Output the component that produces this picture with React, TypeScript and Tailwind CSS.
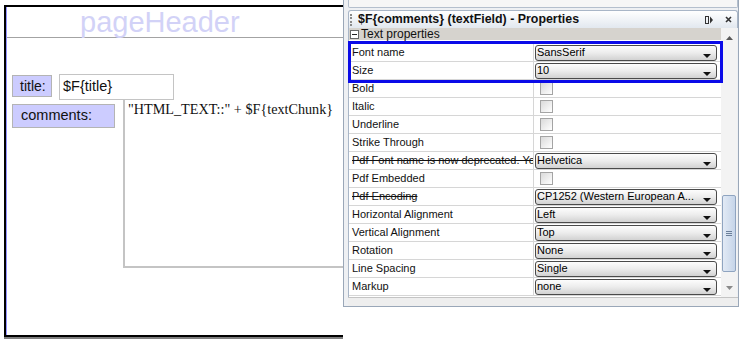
import React from "react"

type Row = {
	name: string
	kind: "select" | "check"
	value?: string
	strike?: boolean
	tall?: boolean
}

const rows: Row[] = [
	{ name: "Font name", kind: "select", value: "SansSerif", tall: true },
	{ name: "Size", kind: "select", value: "10" },
	{ name: "Bold", kind: "check" },
	{ name: "Italic", kind: "check" },
	{ name: "Underline", kind: "check" },
	{ name: "Strike Through", kind: "check" },
	{
		name: "Pdf Font name is now deprecated. You should use font extensions",
		kind: "select",
		value: "Helvetica",
		strike: true,
	},
	{ name: "Pdf Embedded", kind: "check" },
	{
		name: "Pdf Encoding",
		kind: "select",
		value: "CP1252 (Western European A...",
		strike: true,
	},
	{ name: "Horizontal Alignment", kind: "select", value: "Left" },
	{ name: "Vertical Alignment", kind: "select", value: "Top" },
	{ name: "Rotation", kind: "select", value: "None" },
	{ name: "Line Spacing", kind: "select", value: "Single" },
	{ name: "Markup", kind: "select", value: "none" },
]

function Select({ value }: { value: string }) {
	return (
		<div className="relative flex h-[16px] w-[182px] items-center rounded-[3px] border border-[#4a4a4a] bg-linear-to-b from-[#fdfdfd] via-[#ececec] to-[#d2d2d2] pl-[1px] text-[11px] leading-none text-black">
			<span className="whitespace-nowrap">{value}</span>
			<svg
				className="absolute right-[5px] top-[8px]"
				width="8"
				height="4"
				viewBox="0 0 8 4"
			>
				<path d="M0 0h8L4 4z" fill="#111" />
			</svg>
		</div>
	)
}

function Check() {
	return (
		<div className="ml-[5px] h-[13px] w-[13px] border border-[#a4a4a4] bg-linear-to-br from-[#dadada] to-white" />
	)
}

function Canvas() {
	return (
		<div className="h-full w-[343px] shrink-0 overflow-hidden">
			<div className="ml-[4px] mt-[5px] h-[332px] w-[420px] border-y-2 border-l-2 border-black shadow-[0_2px_0_#7f7f7f]">
				<div className="relative h-full border-l border-[#9494ff] font-['Liberation_Sans',Arial,sans-serif]">
					{/* band separator */}
					<div className="absolute left-0 right-0 top-[30px] h-px bg-[#a3a3a3]" />
					<div className="absolute left-[73px] top-[1px] text-[29px] leading-none text-[#d2d2f7]">
						pageHeader
					</div>

					<div className="absolute left-[5px] top-[68px] flex h-[22px] w-[40px] items-center border border-[#b4b4b4] bg-[#ccccff] pl-[7px] text-[14px] text-[#111]">
						title:
					</div>
					<div className="absolute left-[52px] top-[67px] flex h-[26px] w-[115px] items-center border border-[#c4c4c4] pl-[3px] text-[14.5px] text-[#111]">
						$F{"{title}"}
					</div>
					<div className="absolute left-[5px] top-[97px] flex h-[24px] w-[103px] items-center border border-[#b4b4b4] bg-[#ccccff] pl-[8px] text-[14.5px] text-[#111]">
						comments:
					</div>
					<div className="absolute left-[116px] top-[93px] h-[168px] w-[300px] border-b-2 border-l-2 border-[#c4c4c4] pl-[3px] pt-[2px] font-['Liberation_Serif','Times_New_Roman',serif] text-[14.2px] leading-none text-[#111]">
						"HTML_TEXT::" + $F{"{textChunk}"}
					</div>
				</div>
			</div>
		</div>
	)
}

function Properties() {
	return (
		<div className="flex h-[307px] w-[396px] shrink-0 flex-col border-x border-b border-[#9aa7b8] bg-[#eef0f3] pl-[4px] font-['Liberation_Sans',Arial,sans-serif] text-[#111]">
			<div className="h-[8px] rounded-b-[2px] border-x border-b border-[#b4bfcd] bg-[#f6f6f6]" />

			{/* title bar */}
			<div className="mt-[2px] flex h-[18px] items-center rounded-t-[3px] border border-b-0 border-[#a9b6c7] bg-linear-to-b from-white to-[#e2e8ef]">
				<div className="ml-[1px] h-[12px] border-l-2 border-dotted border-[#8a8a8a]" />
				<span className="ml-[6px] text-[12.4px] font-bold leading-none">
					$F{"{comments}"} (textField) - Properties
				</span>
				<svg className="ml-auto" width="8" height="8" viewBox="0 0 8 8">
					<rect x="0.5" y="0.5" width="3" height="7" fill="none" stroke="#333" />
					<path d="M5 0.5L8 4L5 7.5z" fill="#333" />
				</svg>
				<svg className="ml-[12px] mr-[5px]" width="7" height="7" viewBox="0 0 7 7">
					<path d="M1 1L6 6M6 1L1 6" stroke="#333" strokeWidth="1.6" />
				</svg>
			</div>

			<div className="relative flex h-[269px]">
				<div className="w-[373px] border-l border-[#a9b6c7] bg-white">
					<div className="flex h-[12px] items-center bg-[#d6d3ce] text-[12px] leading-none">
						<svg className="ml-[1px] mr-[2px]" width="9" height="9" viewBox="0 0 9 9">
							<rect x="0.5" y="0.5" width="8" height="8" fill="white" stroke="#666" />
							<path d="M2 4.5h5" stroke="#222" />
						</svg>
						Text properties
					</div>
					{rows.map((r) => (
						<div
							key={r.name}
							className={`flex border-b border-[#d6d6d6] ${r.tall ? "h-[22px] pt-[4px]" : "h-[18px]"}`}
						>
							<div
								className={`w-[185px] shrink-0 overflow-hidden whitespace-nowrap border-r border-[#d6d6d6] pl-[3px] text-[11px] leading-[17px] ${r.strike ? "line-through" : ""}`}
							>
								{r.name}
							</div>
							<div className="flex flex-1 items-center pl-[1px]">
								{r.kind === "select" ? <Select value={r.value ?? ""} /> : <Check />}
							</div>
						</div>
					))}
				</div>

				{/* scrollbar */}
				<div className="flex w-[16px] flex-col items-center bg-[#f3f3f3]">
					<svg className="mt-[8px]" width="7" height="4" viewBox="0 0 7 4">
						<path d="M3.5 0L7 4H0z" fill="#5a5a5a" />
					</svg>
					<div className="mt-[155px] flex h-[77px] w-[14px] items-center justify-center rounded-[2px] border border-[#8fa4c0] bg-linear-to-r from-[#e2eaf5] to-[#c6d5e9]">
						<div className="flex flex-col gap-[1px]">
							<div className="h-px w-[6px] bg-[#6b7f99]" />
							<div className="h-px w-[6px] bg-[#6b7f99]" />
							<div className="h-px w-[6px] bg-[#6b7f99]" />
						</div>
					</div>
					<svg className="mt-[14px]" width="7" height="4" viewBox="0 0 7 4">
						<path d="M0 0h7L3.5 4z" fill="#8a8a8a" />
					</svg>
				</div>

				{/* highlight */}
				<div className="absolute left-0 top-[13px] h-[42px] w-[375px] border-[3px] border-[#0b0be8]" />
			</div>

			<div className="h-[9px] border-t border-[#c4c4c4] bg-[#eeeeee]" />
		</div>
	)
}

export default function App() {
	return (
		<div className="flex h-[343px] w-[743px] overflow-hidden bg-white">
			<Canvas />
			<Properties />
		</div>
	)
}
